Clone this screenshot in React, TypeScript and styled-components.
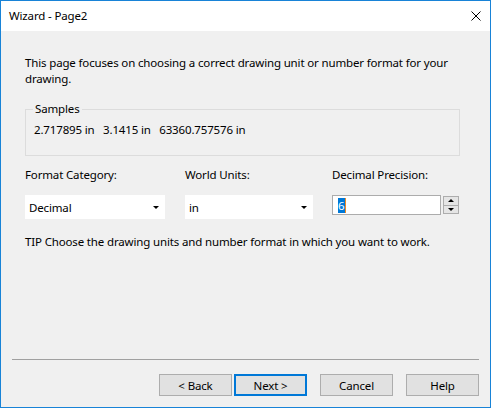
import React from "react";
import styled, { createGlobalStyle } from "styled-components";

const GlobalStyle = createGlobalStyle`
  html, body { margin: 0; padding: 0; background: #ffffff; }
  body {
    font-family: "Noto Sans", "DejaVu Sans", sans-serif;
    font-size: 11.5px;
    letter-spacing: -0.15px;
    color: #000;
  }
  * { box-sizing: border-box; }
`;

const Window = styled.div`
  width: 491px;
  height: 408px;
  border: 1px solid #1883d7;
  background: #f0f0f0;
  display: flex;
  flex-direction: column;
`;

const TitleBar = styled.div`
  height: 30px;
  background: #ffffff;
  display: flex;
  align-items: center;
  justify-content: space-between;
  padding: 0 9px 0 8px;
`;

const Title = styled.span`
  line-height: 16px;
`;

const CloseIcon = styled.svg`
  width: 10px;
  height: 10px;
  display: block;
`;

const Body = styled.div`
  flex: 1;
  display: flex;
  flex-direction: column;
  padding: 24px 0 0 24px;
`;

const Intro = styled.p`
  margin: 0;
  width: 440px;
  line-height: 16px;
`;

const Group = styled.fieldset`
  margin: 14px 0 0 0;
  width: 435px;
  height: 55px;
  border: 1px solid #dcdcdc;
  padding: 5px 8px 0 8px;
`;

const Legend = styled.legend`
  padding: 0 2px;
  margin-left: -1px;
  line-height: 16px;
`;

const Samples = styled.div`
  white-space: pre;
  line-height: 16px;
`;

const FieldGrid = styled.div`
  margin-top: 11px;
  display: grid;
  grid-template-columns: 160px 147px 1fr;
  row-gap: 12px;
  align-items: start;
`;

const Label = styled.div`
  line-height: 16px;
`;

const Combo = styled.div<{ $w: number }>`
  width: ${(p) => p.$w}px;
  height: 24px;
  background: #ffffff;
  display: flex;
  align-items: center;
  justify-content: space-between;
  padding: 0 6px 0 4px;
`;

const Arrow = styled.span<{ $up?: boolean }>`
  width: 0;
  height: 0;
  border-left: 3px solid transparent;
  border-right: 3px solid transparent;
  ${(p) =>
    p.$up ? "border-bottom: 3px solid #000;" : "border-top: 3px solid #000;"}
`;

const SpinRow = styled.div`
  display: flex;
  align-items: flex-start;
  gap: 2px;
`;

const Edit = styled.div`
  width: 109px;
  height: 20px;
  background: #ffffff;
  border: 1px solid #acacac;
  display: flex;
  align-items: center;
  padding-left: 5px;
`;

const Selected = styled.span`
  background: #0078d7;
  color: #ffffff;
  line-height: 15px;
  padding: 0 1px 0 0;
  border-right: 1px solid #f08a24;
`;

const Spin = styled.div`
  margin-top: 1px;
  width: 16px;
  height: 18px;
  display: flex;
  flex-direction: column;
`;

const SpinButton = styled.div`
  flex: 1;
  background: #e5e5e5;
  border: 1px solid #adadad;
  display: flex;
  align-items: center;
  justify-content: center;
  & + & { border-top: none; }
`;

const Tip = styled.p`
  margin: 15px 0 0 0;
  line-height: 16px;
`;

const Footer = styled.div`
  margin-top: auto;
  padding: 0 11px 11px 11px;
`;

const Separator = styled.div`
  height: 1px;
  background: #a0a0a0;
`;

const ButtonRow = styled.div`
  display: flex;
  justify-content: flex-end;
  padding-top: 14px;
`;

const Button = styled.button<{ $primary?: boolean; $gap?: number }>`
  width: 73px;
  height: 22px;
  margin-left: ${(p) => p.$gap ?? 0}px;
  padding: 0;
  font-family: inherit;
  font-size: inherit;
  letter-spacing: inherit;
  color: #000;
  background: #e1e1e1;
  border: ${(p) => (p.$primary ? "2px solid #0078d7" : "1px solid #adadad")};
`;

export default function App() {
  return (
    <>
      <GlobalStyle />
      <Window>
        <TitleBar>
          <Title>Wizard - Page2</Title>
          <CloseIcon viewBox="0 0 10 10">
            <path d="M0.5 0.5 L9.5 9.5 M9.5 0.5 L0.5 9.5" stroke="#000" strokeWidth="1" fill="none" />
          </CloseIcon>
        </TitleBar>
        <Body>
          <Intro>
            This page focuses on choosing a correct drawing unit or number format for your drawing.
          </Intro>
          <Group>
            <Legend>Samples</Legend>
            <Samples>{"2.717895 in   3.1415 in   63360.757576 in"}</Samples>
          </Group>
          <FieldGrid>
            <Label>Format Category:</Label>
            <Label>World Units:</Label>
            <Label>Decimal Precision:</Label>
            <Combo $w={140}>
              <span>Decimal</span>
              <Arrow />
            </Combo>
            <Combo $w={128}>
              <span>in</span>
              <Arrow />
            </Combo>
            <SpinRow>
              <Edit>
                <Selected>6</Selected>
              </Edit>
              <Spin>
                <SpinButton>
                  <Arrow $up />
                </SpinButton>
                <SpinButton>
                  <Arrow />
                </SpinButton>
              </Spin>
            </SpinRow>
          </FieldGrid>
          <Tip>TIP Choose the drawing units and number format in which you want to work.</Tip>
        </Body>
        <Footer>
          <Separator />
          <ButtonRow>
            <Button>&lt; Back</Button>
            <Button $primary $gap={2}>Next &gt;</Button>
            <Button $gap={13}>Cancel</Button>
            <Button $gap={13}>Help</Button>
          </ButtonRow>
        </Footer>
      </Window>
    </>
  );
}
